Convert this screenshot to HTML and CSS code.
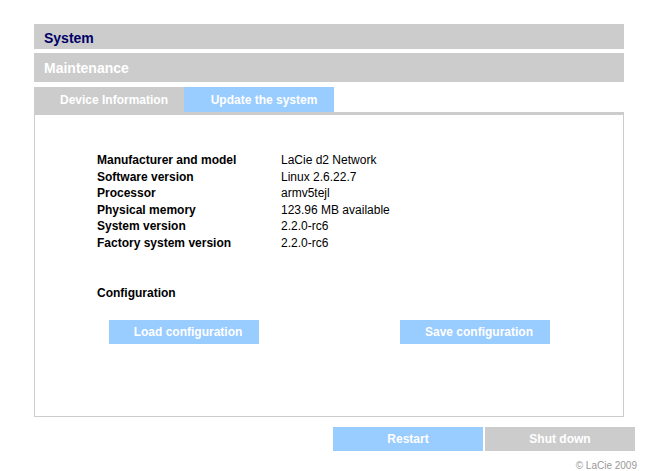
FILE: index.html
```html
<!DOCTYPE html>
<html>
<head>
<meta charset="utf-8">
<link rel="stylesheet" href="styles.css">
</head>
<body>
<div class="page">
  <div class="bar bar-system">System</div>
  <div class="bar bar-section">Maintenance</div>
  <div class="tabs">
    <div class="tab tab-gray">Device Information</div>
    <div class="tab tab-blue">Update the system</div>
  </div>
  <div class="panel">
    <div class="info">
      <div class="label">Manufacturer and model</div><div class="value">LaCie d2 Network</div>
      <div class="label">Software version</div><div class="value">Linux 2.6.22.7</div>
      <div class="label">Processor</div><div class="value">armv5tejl</div>
      <div class="label">Physical memory</div><div class="value">123.96 MB available</div>
      <div class="label">System version</div><div class="value">2.2.0-rc6</div>
      <div class="label">Factory system version</div><div class="value">2.2.0-rc6</div>
    </div>
    <div class="config-title">Configuration</div>
    <div class="config-buttons">
      <div class="btn btn-blue btn-offset">Load configuration</div>
      <div class="btn btn-blue btn-offset">Save configuration</div>
    </div>
  </div>
  <div class="actions">
    <div class="btn btn-blue">Restart</div>
    <div class="btn btn-gray">Shut down</div>
  </div>
  <div class="footer">© LaCie 2009</div>
</div>
</body>
</html>
```

FILE: styles.css
```css
html, body {
  margin: 0;
  padding: 0;
  background: #ffffff;
}
body {
  font-family: "Liberation Sans", Arial, Helvetica, sans-serif;
  font-size: 12px;
  color: #000;
  overflow: hidden;
}
.page {
  width: 590px;
  padding: 24px 0 0 34px;
}
.bar {
  background: #cccccc;
  font-weight: bold;
  font-size: 14px;
  padding-left: 10px;
  display: flex;
  align-items: center;
}
.bar-system {
  height: 25px;
  padding-top: 2px;
  box-sizing: border-box;
  color: #000066;
}
.bar-section {
  height: 29px;
  margin-top: 4px;
  color: #ffffff;
}
.tabs {
  display: flex;
  margin-top: 5px;
}
.tab {
  width: 150px;
  height: 25px;
  box-sizing: border-box;
  padding-left: 10px;
  display: flex;
  align-items: center;
  justify-content: center;
  color: #ffffff;
  font-weight: bold;
  font-size: 12px;
}
.tab-gray { background: #cccccc; }
.tab-blue { background: #99ccff; }
.panel {
  height: 305px;
  box-sizing: border-box;
  border: 1px solid #cccccc;
  border-top: 3px solid #cccccc;
  padding: 37px 0 0 62px;
}
.info {
  display: grid;
  grid-template-columns: 184px auto;
  line-height: 16.5px;
}
.label { font-weight: bold; }
.config-title {
  font-weight: bold;
  line-height: 16.5px;
  margin-top: 34px;
}
.config-buttons {
  display: flex;
  gap: 141px;
  margin-top: 18px;
  margin-left: 12px;
}
.btn {
  flex: 0 0 150px;
  width: 150px;
  height: 24px;
  box-sizing: border-box;
  display: flex;
  align-items: center;
  justify-content: center;
  color: #ffffff;
  font-weight: bold;
  font-size: 12px;
}
.btn-offset { padding-left: 8px; }
.btn-blue { background: #99ccff; }
.btn-gray { background: #cccccc; }
.actions {
  display: flex;
  gap: 2px;
  margin-top: 10px;
  margin-left: 299px;
  width: 302px;
}
.footer {
  width: 603px;
  text-align: right;
  font-size: 10px;
  line-height: 10px;
  color: #999999;
  margin-top: 10px;
}
```
